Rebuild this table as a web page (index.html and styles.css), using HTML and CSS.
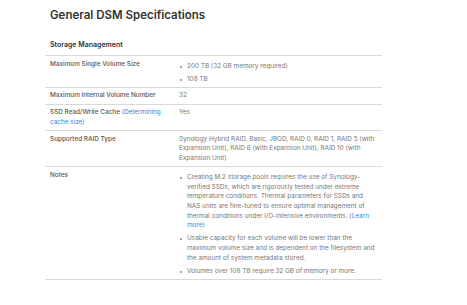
FILE: index.html
```html
<!DOCTYPE html>
<html>
<head>
<meta charset="utf-8">
<link rel="stylesheet" href="styles.css">
</head>
<body>
<div class="page">
  <h1 class="title">General DSM Specifications</h1>
  <div class="section">Storage Management</div>
  <div class="table">
    <div class="row">
      <div class="label">Maximum Single Volume Size</div>
      <div class="value">
        <ul class="list">
          <li>200 TB (32 GB memory required)</li>
          <li>108 TB</li>
        </ul>
      </div>
    </div>
    <div class="row">
      <div class="label">Maximum Internal Volume Number</div>
      <div class="value">32</div>
    </div>
    <div class="row">
      <div class="label">SSD Read/Write Cache <a class="link"><span>(Determining</span> <span>cache size)</span></a></div>
      <div class="value">Yes</div>
    </div>
    <div class="row">
      <div class="label">Supported RAID Type</div>
      <div class="value">Synology Hybrid RAID, Basic, JBOD, RAID 0, RAID 1, RAID 5 (with Expansion Unit), RAID 6 (with Expansion Unit), RAID 10 (with Expansion Unit)</div>
    </div>
    <div class="row">
      <div class="label">Notes</div>
      <div class="value">
        <ul class="list">
          <li>Creating M.2 storage pools requires the use of Synology-verified SSDs, which are rigorously tested under extreme temperature conditions. Thermal parameters for SSDs and NAS units are fine-tuned to ensure optimal management of thermal conditions under I/O-intensive environments. (<a class="link"><span>Learn</span> <span>more</span></a>)</li>
          <li>Usable capacity for each volume will be lower than the maximum volume size and is dependent on the filesystem and the amount of system metadata stored.</li>
          <li>Volumes over 108 TB require 32 GB of memory or more.</li>
        </ul>
      </div>
    </div>
  </div>
</div>
</body>
</html>
```
FILE: styles.css
```css
html, body {
  margin: 0;
  padding: 0;
  background: #ffffff;
}
body {
  font-family: Inter, "Noto Sans", sans-serif;
  color: #333;
}
.page {
  width: 337px;
  margin-left: 45px;
  padding-top: 7px;
}
.title {
  margin: 0 0 0 5px;
  font-size: 11.5px;
  line-height: 16px;
  font-weight: 600;
  color: #333;
}
.section {
  padding: 17px 5px 5px;
  font-size: 7px;
  line-height: 10px;
  font-weight: 600;
  color: #333;
  border-bottom: 1px solid #d9d9d9;
}
.row {
  display: flex;
  padding: 3.5px 5px 2.6px;
  border-bottom: 1px solid #d9d9d9;
  font-size: 6.4px;
  line-height: 9.7px;
}
.label {
  width: 129px;
  flex: none;
  font-weight: 500;
  color: #555;
}
.value {
  flex: 1;
  color: #777;
}
.link {
  color: #2f86e8;
  font-weight: 400;
}
.list {
  list-style: none;
  margin: 2px 0 0;
  padding: 0;
}
.list li {
  position: relative;
  padding-left: 8px;
}
.list li + li {
  margin-top: 3.3px;
}
.list li::before {
  content: "";
  position: absolute;
  left: 1px;
  top: 4px;
  width: 2px;
  height: 2px;
  border-radius: 50%;
  background: #888;
}
```
